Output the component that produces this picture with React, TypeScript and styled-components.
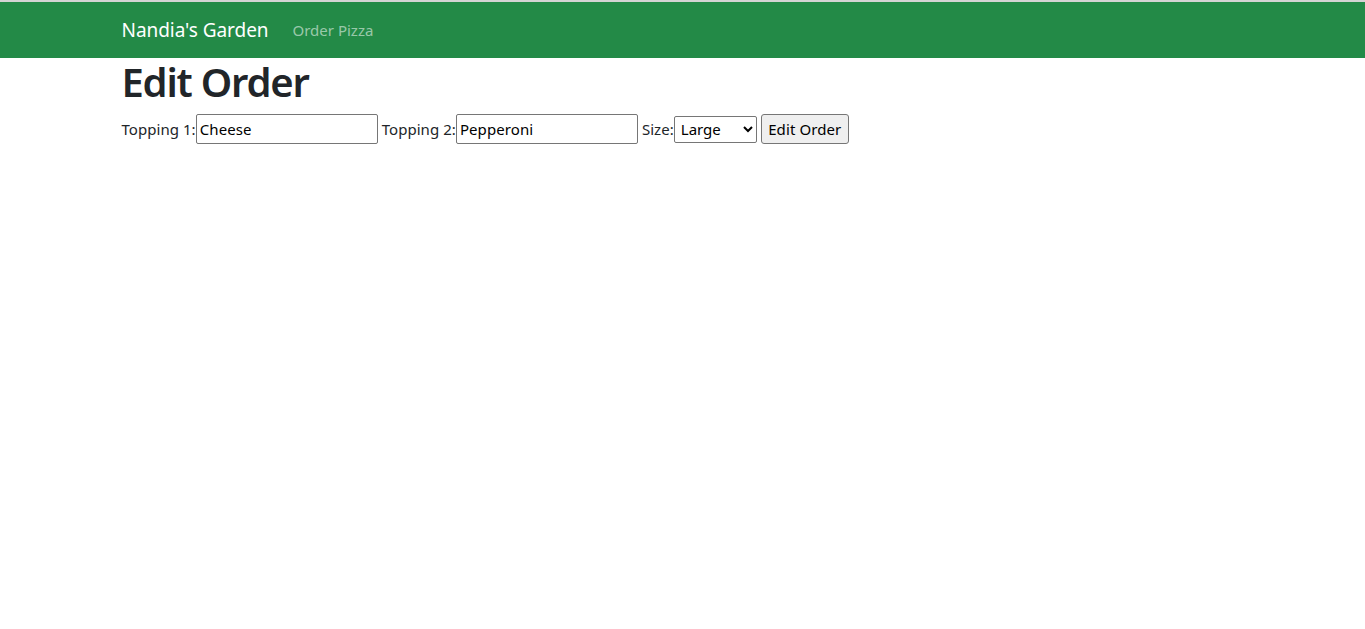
import React from "react";
import styled, { createGlobalStyle } from "styled-components";

const Global = createGlobalStyle`
  html, body { margin: 0; padding: 0; background: #fff; }
  body {
    font-family: "Noto Sans", "Open Sans", sans-serif;
    font-size: 16px;
    line-height: 1.5;
    color: #212529;
    border-top: 2px solid #d4d4d4;
  }
  * { box-sizing: border-box; }
`;

const Nav = styled.nav`
  background: #238a47;
  height: 56px;
  display: flex;
  align-items: center;
`;

const Container = styled.div`
  width: 1140px;
  margin: 0 auto;
  padding: 0 9px;
  display: flex;
  align-items: center;
`;

const Brand = styled.a`
  color: #fff;
  font-size: 19px;
  margin-right: 24px;
  text-decoration: none;
  letter-spacing: -0.05px;
`;

const NavLink = styled.a`
  color: rgba(255, 255, 255, 0.55);
  font-size: 15px;
  text-decoration: none;
  letter-spacing: 0;
`;

const Main = styled.main`
  width: 1140px;
  margin: 0 auto;
  padding: 0 9px;
`;

const Title = styled.h1`
  font-size: 40px;
  font-weight: 600;
  line-height: 48px;
  margin: 0 0 8px;
  letter-spacing: -1.2px;
`;

const Form = styled.form`
  display: flex;
  align-items: center;
  gap: 4px;
`;

const Field = styled.label`
  display: flex;
  align-items: center;
  font-size: 15px;
  letter-spacing: 0.05px;
`;

const TextInput = styled.input<{ $w: number }>`
  width: ${(p) => p.$w}px;
  height: 30px;
  border: 1px solid #767676;
  border-radius: 2px;
  padding: 1px 3px;
  font-family: inherit;
  font-size: 15px;
  color: #000;
  letter-spacing: 0.1px;
`;

const Select = styled.select`
  width: 83px;
  height: 27px;
  border: 1px solid #767676;
  border-radius: 2px;
  font-family: inherit;
  font-size: 15px;
  color: #000;
  background: #fff;
  padding: 0 0 0 2px;
`;

const Button = styled.button`
  height: 30px;
  width: 88px;
  padding: 1px 6px;
  background: #efefef;
  border: 1px solid #767676;
  border-radius: 3px;
  font-family: inherit;
  font-size: 15px;
  color: #000;
  letter-spacing: 0.1px;
`;

export default function App() {
  return (
    <>
      <Global />
      <Nav>
        <Container>
          <Brand href="#">Nandia's Garden</Brand>
          <NavLink href="#">Order Pizza</NavLink>
        </Container>
      </Nav>
      <Main>
        <Title>Edit Order</Title>
        <Form onSubmit={(e) => e.preventDefault()}>
          <Field>
            Topping 1:
            <TextInput $w={182} defaultValue="Cheese" />
          </Field>
          <Field>
            Topping 2:
            <TextInput $w={182} defaultValue="Pepperoni" />
          </Field>
          <Field>
            Size:
            <Select defaultValue="Large">
              <option>Small</option>
              <option>Medium</option>
              <option>Large</option>
            </Select>
          </Field>
          <Button type="submit">Edit Order</Button>
        </Form>
      </Main>
    </>
  );
}
